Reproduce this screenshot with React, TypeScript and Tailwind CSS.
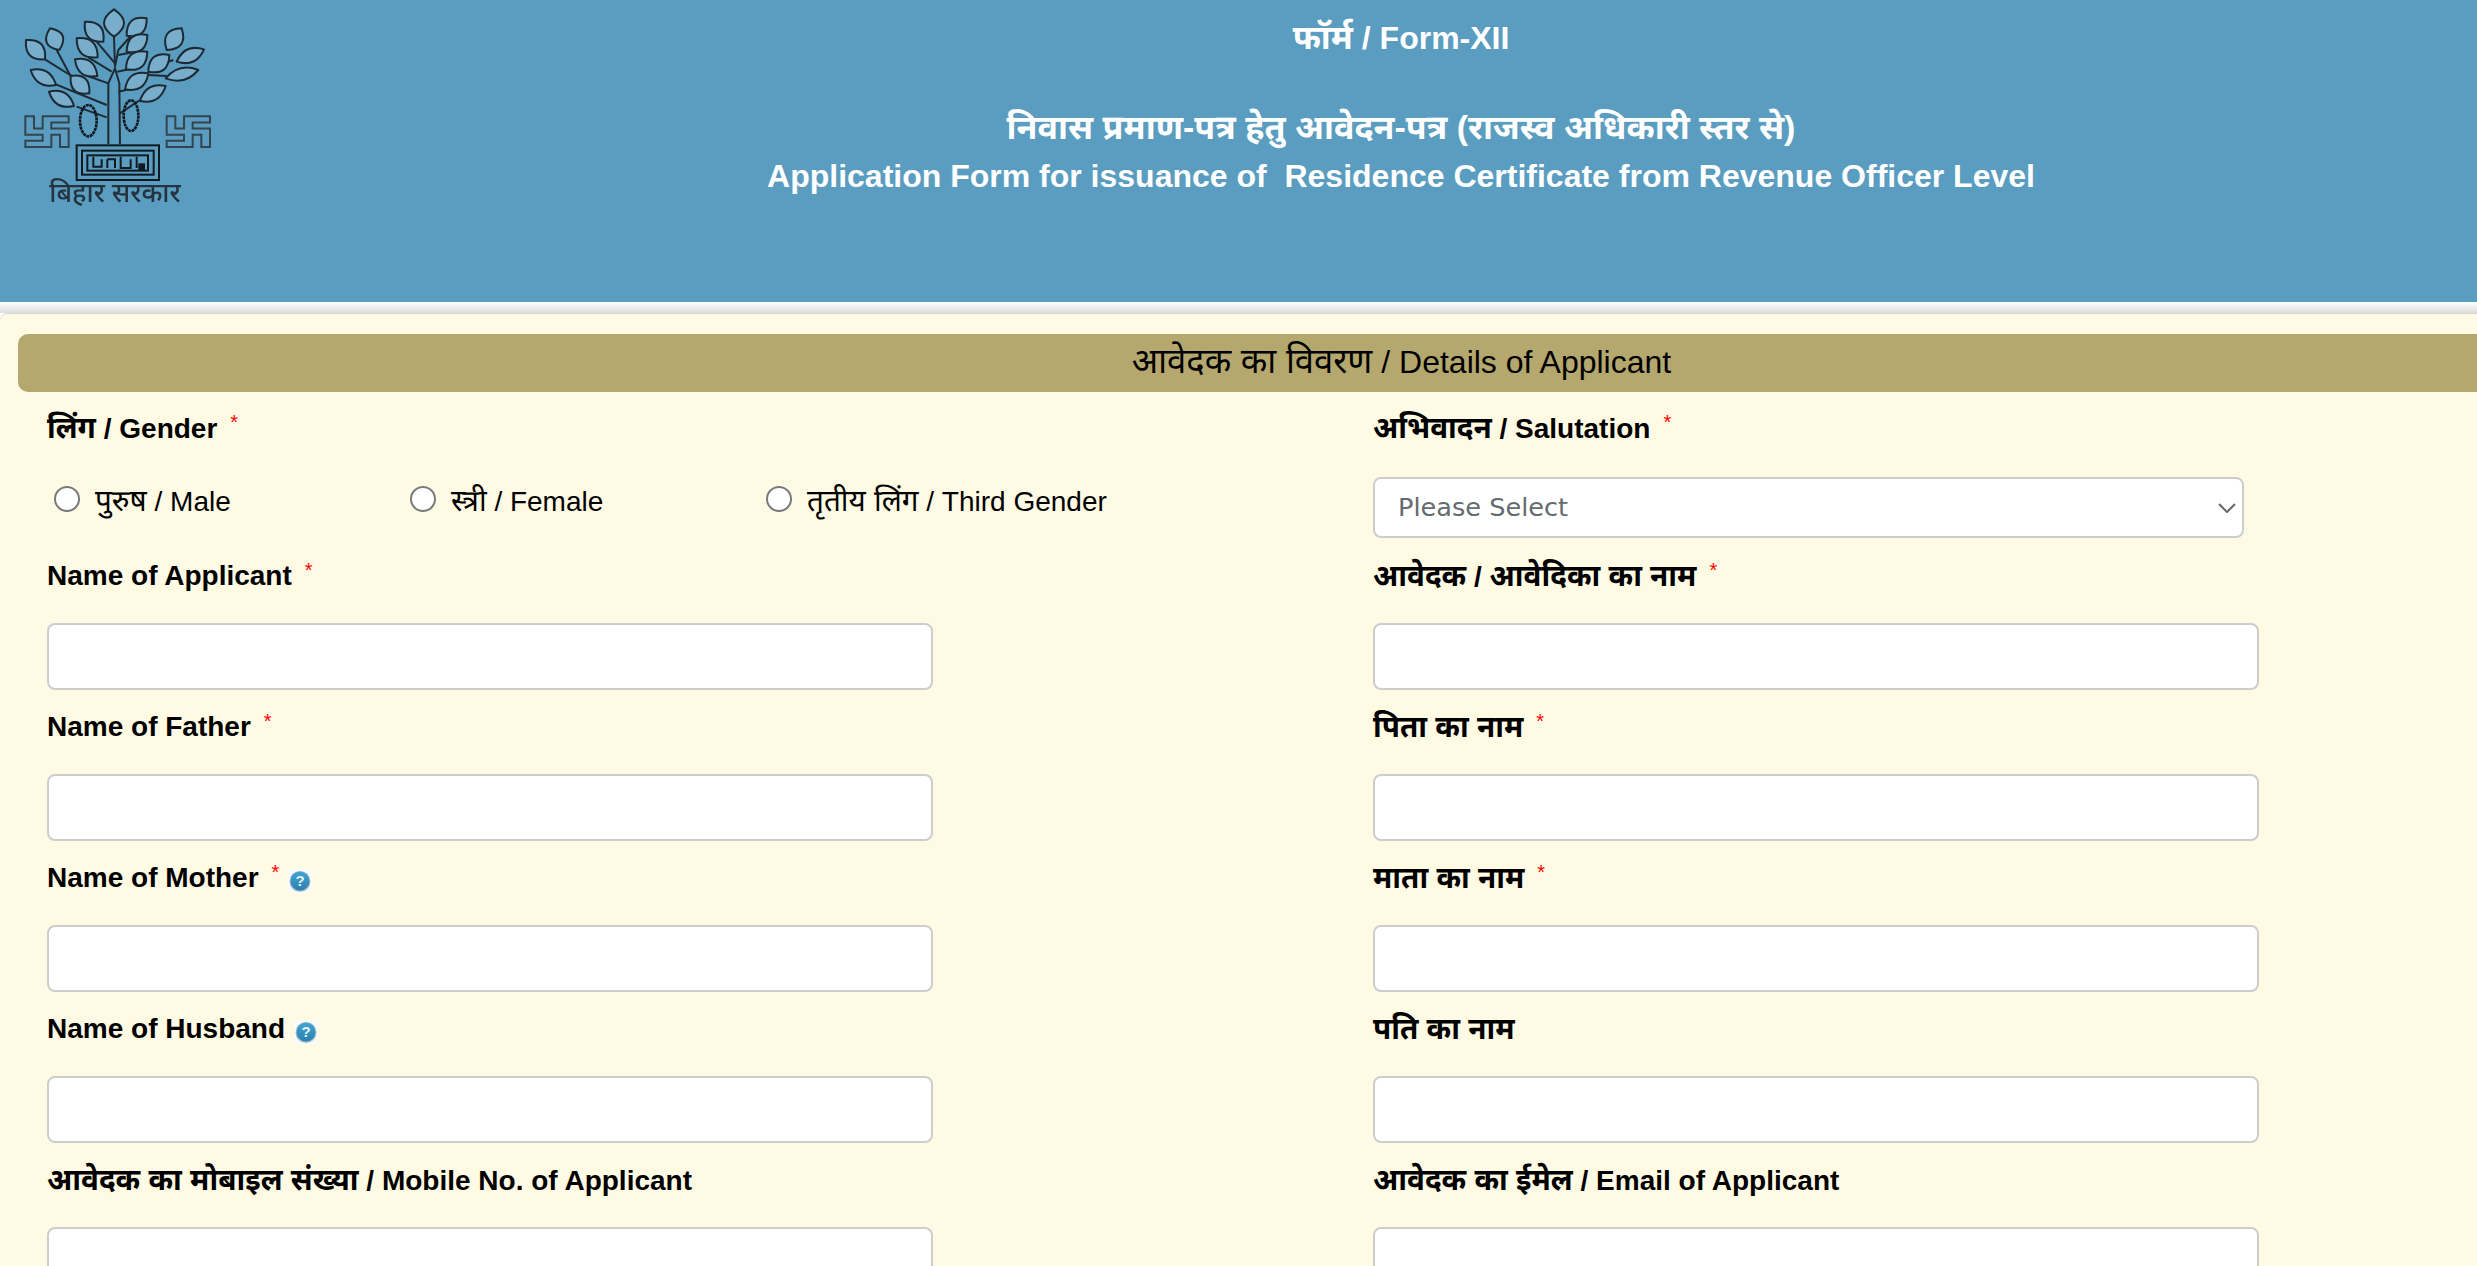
const fontStack = "font-['Liberation_Sans','Noto_Sans_Devanagari','Noto_Sans',sans-serif]";

// Hindi runs sit a little larger than the latin text around them
function Mixed({ text, hindi = 'text-[1.06em]' }: { text: string; hindi?: string }) {
  const parts = text.split(/([\u0900-\u097F]+(?:\s+[\u0900-\u097F]+)*)/);
  return (
    <>
      {parts.map((part, i) =>
        i % 2 === 1 ? (
          <span key={i} className={hindi}>
            {part}
          </span>
        ) : (
          part
        ),
      )}
    </>
  );
}

function Leaf({ x1, y1, x2, y2, w }: { x1: number; y1: number; x2: number; y2: number; w: number }) {
  const mx = (x1 + x2) / 2;
  const my = (y1 + y2) / 2;
  const dx = x2 - x1;
  const dy = y2 - y1;
  const len = Math.hypot(dx, dy);
  const nx = (-dy / len) * w * 2;
  const ny = (dx / len) * w * 2;
  return (
    <path
      d={`M${x1} ${y1}Q${mx + nx} ${my + ny} ${x2} ${y2}Q${mx - nx} ${my - ny} ${x1} ${y1}Z`}
      fill="#78aecb"
      stroke="#1d2a33"
      strokeWidth="6"
      strokeLinejoin="round"
    />
  );
}

const leaves = [
  [342, 28, 342, 110, 30],
  [255, 65, 310, 125, 24],
  [380, 107, 440, 55, 24],
  [78, 120, 135, 178, 24],
  [150, 85, 178, 150, 26],
  [230, 115, 293, 172, 24],
  [380, 155, 442, 105, 24],
  [500, 150, 545, 85, 26],
  [378, 208, 442, 155, 24],
  [445, 215, 508, 165, 24],
  [530, 185, 612, 148, 20],
  [225, 178, 292, 228, 22],
  [92, 210, 168, 255, 20],
  [497, 235, 595, 210, 18],
  [375, 268, 445, 220, 22],
  [212, 228, 268, 280, 24],
  [147, 275, 222, 318, 20],
  [420, 303, 497, 258, 20],
];

const branches = [
  'M342 110L345 200',
  'M290 125L345 190',
  'M395 105L355 150L345 200',
  'M265 172L335 215',
  'M405 155L355 165',
  'M400 205L352 215',
  'M255 225L325 250',
  'M170 150L210 225L240 240',
  'M130 175L210 225',
  'M160 250L320 315',
  'M445 205L520 180',
  'M445 225L500 228',
  'M400 265L355 275',
  'M230 320L320 352',
  'M360 340L420 300',
  'M325 432L325 250L345 205L358 250L360 432',
];

const crossCells = [
  [0, 0], [1, 0], [1, 2], [2, 2], [2, 0], [5, 0], [5, 1], [3, 1], [3, 2], [5, 2],
  [5, 5], [4, 5], [4, 3], [3, 3], [3, 5], [0, 5], [0, 4], [2, 4], [2, 3], [0, 3],
];

function Cross({ x }: { x: number }) {
  const points = crossCells.map(([cx, cy]) => `${x + cx * 26},${349 + cy * 18.4}`).join(' ');
  return <polygon points={points} fill="none" stroke="#34444f" strokeWidth="6" />;
}

function Logo() {
  return (
    <svg viewBox="0 0 780 690" className="h-[230px] w-[260px] blur-[0.5px]">
      {branches.map((d) => (
        <path key={d} d={d} fill="none" stroke="#1d2a33" strokeWidth="6" />
      ))}
      {leaves.map(([x1, y1, x2, y2, w]) => (
        <Leaf key={`${x1}-${y1}`} x1={x1} y1={y1} x2={x2} y2={y2} w={w} />
      ))}
      <ellipse cx="265" cy="362" rx="25" ry="47" fill="none" stroke="#111a20" strokeWidth="8" strokeDasharray="9 2" />
      <ellipse cx="393" cy="347" rx="22" ry="46" fill="none" stroke="#111a20" strokeWidth="8" strokeDasharray="9 2" />
      <Cross x={76} />
      <Cross x={500} />
      <rect x="230" y="436" width="247" height="104" fill="none" stroke="#111a20" strokeWidth="6" />
      <rect x="246" y="452" width="215" height="72" fill="none" stroke="#111a20" strokeWidth="6" />
      <rect x="262" y="466" width="182" height="46" fill="none" stroke="#111a20" strokeWidth="6" />
      <path d="M280 470V500H305V478M322 478V504M322 478H345V504M362 470V504H392V478M410 470V504" fill="none" stroke="#111a20" strokeWidth="6" />
      <rect x="415" y="490" width="20" height="20" fill="#111a20" />
      <text x="345" y="606" textAnchor="middle" fontSize="80" fontWeight="500" fill="#24333d" fontFamily="'Noto Sans Devanagari','Noto Sans',sans-serif">
        बिहार सरकार
      </text>
    </svg>
  );
}

function Help() {
  return (
    <span className="relative top-[3px] ml-[9px] inline-flex h-[24px] w-[24px] bg-[#f8fbfa]">
      <svg viewBox="0 0 24 24" className="h-[24px] w-[24px]">
        <defs>
          <linearGradient id="helpBlue" x1="0" y1="0" x2="0" y2="1">
            <stop offset="0" stopColor="#44a6d2" />
            <stop offset="1" stopColor="#2a7fae" />
          </linearGradient>
        </defs>
        <circle cx="12" cy="12.5" r="10.5" fill="#a9bcc8" />
        <circle cx="12" cy="12" r="9.5" fill="url(#helpBlue)" />
        <text x="12" y="17" textAnchor="middle" fontSize="15" fontWeight="700" fill="#e4f3fa" fontFamily="'Liberation Sans',sans-serif">
          ?
        </text>
      </svg>
    </span>
  );
}

function Star() {
  return <span className="relative -top-[6px] ml-[13px] text-[20px] font-normal leading-none text-[#f00]">*</span>;
}

function Label({ text, required, help }: { text: string; required?: boolean; help?: boolean }) {
  return (
    <div className="flex h-[74px] items-center text-[28px] font-bold text-black">
      <span>
        <Mixed text={text} />
      </span>
      {required ? <Star /> : null}
      {help ? <Help /> : null}
    </div>
  );
}

function Field({ text, required, help }: { text: string; required?: boolean; help?: boolean }) {
  return (
    <div className="flex h-[151px] flex-col">
      <Label text={text} required={required} help={help} />
      <input type="text" className="mt-[10px] h-[67px] w-[886px] rounded-[8px] border-2 border-[#cdcdcd] bg-white" />
    </div>
  );
}

function Radio({ text }: { text: string }) {
  return (
    <label className="flex w-[356px] items-center pl-[7px] text-[28px] text-black">
      <input
        type="radio"
        name="gender"
        className="h-[26px] w-[26px] appearance-none rounded-full border-[2.5px] border-[#7a7a7a] bg-white"
      />
      <span className="ml-[15px] pt-[4px]">
        <Mixed text={text} hindi="text-[1.06em]" />
      </span>
    </label>
  );
}

function Gender() {
  return (
    <>
      <div className="flex h-[72px] items-center text-[28px] font-bold text-black">
        <span>
          <Mixed text="लिंग / Gender" />
        </span>
        <Star />
      </div>
      <div className="flex h-[70px] items-center">
        <Radio text="पुरुष / Male" />
        <Radio text="स्त्री / Female" />
        <Radio text="तृतीय लिंग / Third Gender" />
      </div>
    </>
  );
}

const fields = [
  { text: 'Name of Applicant', required: true },
  { text: 'आवेदक / आवेदिका का नाम', required: true },
  { text: 'Name of Father', required: true },
  { text: 'पिता का नाम', required: true },
  { text: 'Name of Mother', required: true, help: true },
  { text: 'माता का नाम', required: true },
  { text: 'Name of Husband', help: true },
  { text: 'पति का नाम' },
  { text: 'आवेदक का मोबाइल संख्या / Mobile No. of Applicant' },
  { text: 'आवेदक का ईमेल / Email of Applicant' },
];

export default function App() {
  return (
    <div className={`h-[1266px] overflow-hidden bg-white ${fontStack}`}>
      <header className="flex h-[302px] bg-[#5a9dc0] text-white">
        <div className="w-[325px] shrink-0">
          <Logo />
        </div>
        <div className="flex-1 pt-[14px] text-center font-bold">
          <div className="text-[32px] leading-[46px]">
            <Mixed text="फॉर्म / Form-XII" />
          </div>
          <div className="mt-[43px] text-[34px] leading-[46px]">निवास प्रमाण-पत्र हेतु आवेदन-पत्र (राजस्व अधिकारी स्तर से)</div>
          <div className="mt-[3px] whitespace-pre text-[32px] leading-[46px]">Application Form for issuance of  Residence Certificate from Revenue Officer Level</div>
        </div>
      </header>
      <div className="h-[11px] bg-gradient-to-b from-white to-[#dcdcdc]" />
      <main className="h-[953px] rounded-tl-[8px] border-t border-[#d6d6d6] bg-[#fffae3] pl-[18px] pt-[20px]">
        <div className="flex h-[58px] items-center justify-center rounded-l-[10px] bg-[#b5a86f] pb-[2px] pl-[308px] text-[32px] text-black">
          <span>
            <Mixed text="आवेदक का विवरण / Details of Applicant" hindi="text-[1.08em]" />
          </span>
        </div>
        <div className="grid grid-cols-[1326px_1fr] pl-[29px]">
          <div className="h-[147px]">
            <Gender />
          </div>
          <div className="h-[147px]">
            <div className="flex h-[72px] items-center text-[28px] font-bold text-black">
              <span>
                <Mixed text="अभिवादन / Salutation" />
              </span>
              <Star />
            </div>
            <div className="relative mt-[13px] w-[871px]">
              <select className="h-[61px] w-full appearance-none rounded-[8px] border-2 border-[#cdcdcd] bg-white pl-[23px] pr-[8px] font-['DejaVu_Sans',sans-serif] text-[25.6px] text-[#666b70]">
                <option>Please Select</option>
              </select>
              <svg viewBox="0 0 18 10" className="absolute right-[8px] top-[26px] h-[10px] w-[18px]">
                <path d="M1 1l8 8 8-8" fill="none" stroke="#666" strokeWidth="2" />
              </svg>
            </div>
          </div>
          {fields.map((f) => (
            <Field key={f.text} text={f.text} required={f.required} help={f.help} />
          ))}
        </div>
      </main>
    </div>
  );
}
